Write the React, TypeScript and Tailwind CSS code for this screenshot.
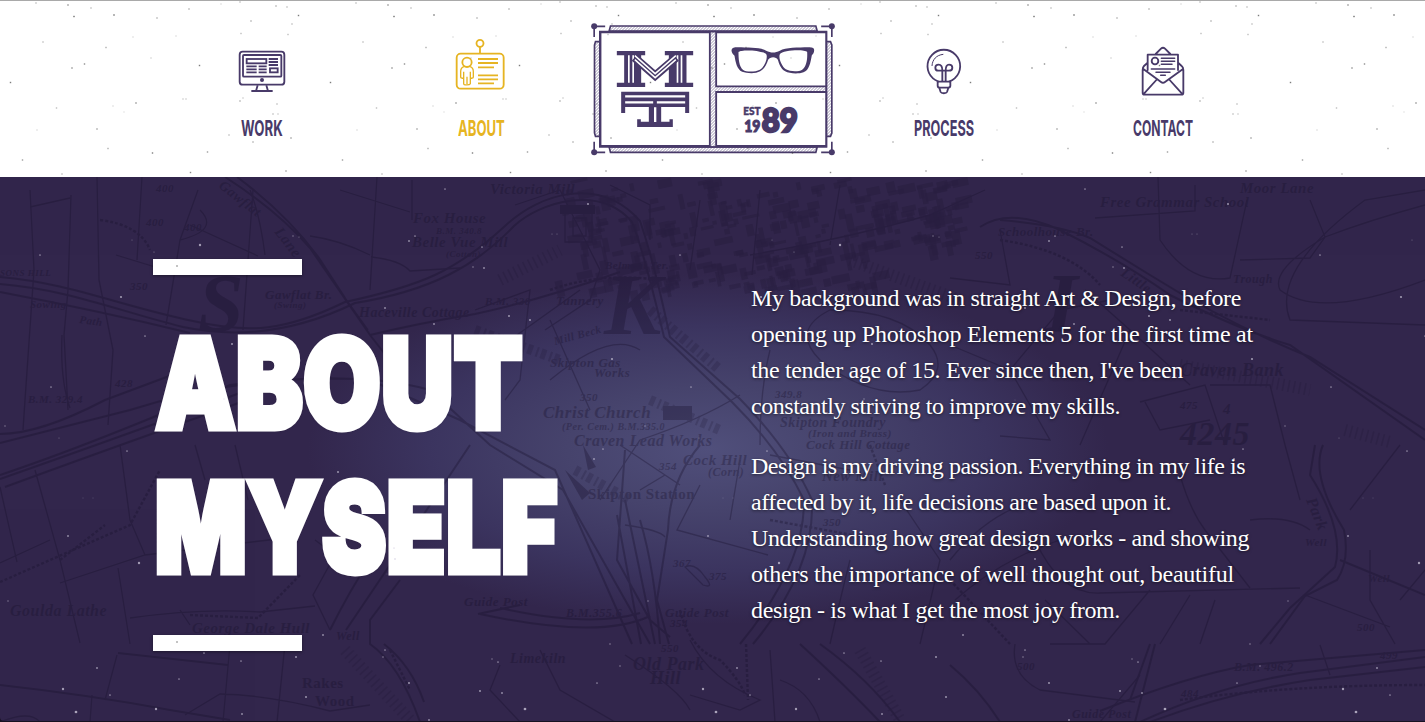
import { useLayoutEffect, useRef, type ReactNode } from "react";

const INK = "#483a69";
const GOLD = "#e6b422";
const MAP = "#150d28";

/* Text squeezed horizontally to a given width */
function Squeezed({ text, width, className }: { text: string; width: number; className: string }) {
  const ref = useRef<HTMLSpanElement>(null);
  useLayoutEffect(() => {
    const el = ref.current;
    if (el) el.style.transform = `scaleX(${width / el.offsetWidth})`;
  }, [width]);
  return (
    <span className="block" style={{ width }}>
      <span ref={ref} className={`inline-block origin-left whitespace-nowrap ${className}`}>{text}</span>
    </span>
  );
}

/* Line of copy tracked out to a given measure */
function Line({ text, width }: { text: string; width: number }) {
  const ref = useRef<HTMLSpanElement>(null);
  useLayoutEffect(() => {
    const el = ref.current;
    if (el) {
      el.style.letterSpacing = "0px";
      el.style.letterSpacing = `${(width - el.getBoundingClientRect().width) / text.length}px`;
    }
  }, [text, width]);
  return (
    <span className="block h-9 whitespace-nowrap">
      <span ref={ref}>{text}</span>
    </span>
  );
}

const lightSpecks: number[][] = [
  [36, 3, 0.4], [68, 5, 0.7], [74, 16.5, 0.9], [91, 8, 0.4], [114, 15, 0.9], [157, 18, 0.5], [189, 9, 0.5], [221, 4, 0.2],
  [43, 42, 0.4], [106, 47.5, 0.5], [72, 68, 0.7], [84.5, 64, 0.7], [10.5, 82.5, 0.8], [151, 58, 0.25], [199.5, 65.5, 0.8],
  [136, 103, 0.7], [183, 99, 0.3], [186, 99, 0.3], [56.5, 108, 0.4], [97, 129, 0.6], [229, 135, 0.4], [108, 148.5, 0.5],
  [152.5, 153, 0.8], [207.5, 152, 0.6], [22.5, 160, 0.6], [62, 174, 0.4], [190.5, 172.5, 0.7], [243, 98, 0.3], [240, 101, 0.5],
  [277, 104, 0.4], [273, 114, 0.4], [278, 114, 0.3], [253, 142, 0.5], [291, 138, 0.6], [298.5, 15.5, 0.8], [276, 6, 0.5],
  [241, 33.5, 0.4], [113, 106, 0.2], [124, 112, 0.15], [37, 130, 0.2], [176, 36, 0.2], [133, 37, 0.2],
  [287, 7, 0.4], [251, 21, 0.5], [292, 24, 0.4], [288, 34.5, 0.4], [286, 171, 0.6], [240, 2, 0.4],
];

const darkSpecks: number[][] = [
  [445, 189, 1], [415, 236, 1], [409, 241, 1.1], [200, 245, 1.4], [40, 255, 1], [293, 236, 0.8], [299, 237, 0.7], [121, 297, 1.3],
  [145, 336, 1], [232, 344, 1.2], [385, 308, 1.1], [434, 324, 1.1], [473, 267, 0.9], [51, 387, 1], [5, 426, 0.8], [59, 438, 0.6],
  [224, 399, 0.8], [154, 252, 0.7], [132, 240, 0.6], [588, 204, 1.2], [482, 247, 1], [484, 268, 1.1], [552, 234, 0.6], [557, 234, 0.6],
  [509, 316, 1.2], [530, 320, 1.2], [612, 359, 1.3], [127, 451, 1], [68, 536, 1.1], [139, 563, 1.4], [8, 601, 0.8], [338, 472, 1.2],
  [323, 635, 1.1], [204, 653, 1], [296, 657, 1.2], [241, 661, 1], [97, 668, 1.1], [63, 689, 1.4], [179, 679, 1], [110, 695, 1],
  [76, 712, 1.6], [156, 709, 1.4], [242, 714, 1.1], [306, 697, 1.2], [409, 683, 1.2], [385, 650, 1], [383, 657, 0.9], [429, 720, 1.1],
  [394, 548, 1], [395, 559, 1.1], [603, 449, 1], [594, 459, 1.1], [610, 644, 0.9], [620, 666, 0.9], [597, 683, 1], [525, 709, 1.6],
  [480, 691, 1.2], [502, 693, 1.1], [498, 662, 1], [492, 659, 0.8], [93, 498, 0.5], [83, 498, 0.5], [387, 574, 0.5], [375, 400, 0.5],
];

const WORK = (
  <g fill="none" stroke={INK} strokeWidth="5.5">
    <rect x="59" y="50" width="134" height="99" rx="9" />
    <rect x="69" y="60" width="115" height="65" rx="3" />
    <rect x="80" y="72" width="59" height="13" />
    <path d="M146 72h28M146 81h28M146 90h28M79 94h31M116 94h24M79 103h31M116 103h24M79 112h31M116 112h24M113 151l-5 17M139 151l5 17M94 168h64" />
    <rect x="150" y="100" width="23" height="12" />
    <circle cx="126" cy="135" r="6" fill={INK} stroke="none" />
  </g>
);

const ABOUT = (
  <g fill="none" stroke={GOLD} strokeWidth="5.5" strokeLinejoin="round">
    <circle cx="780" cy="25" r="10.5" />
    <path d="M780 36v20" />
    <rect x="710" y="56" width="141" height="105" rx="12" />
    <path d="M774 72h60M774 84h60M774 97h48M774 121h60M774 133h60M774 145h48" />
    <circle cx="741" cy="82" r="14" />
    <path d="M732 95c-8 2-10 8-10 15v16c0 4 6 5 9 2v18c0 5 18 5 20 0v-18c3 3 9 2 9-2v-16c0-7-2-13-10-15M741 125v22M731 110v20M751 110v20" strokeWidth="4" />
  </g>
);

const PROCESS = (
  <g fill="none" stroke={INK} strokeWidth="5.5" strokeLinejoin="round">
    <path d="M116 140c-4-2-10-4-17-10a49 49 0 1 1 65 0c-7 6-12 8-17 10" />
    <path d="M113 140v12c0 4 3 6 7 6h23c4 0 8-2 8-6v-12zM118 159l4 12c2 5 17 5 19 0l4-12" />
    <path d="M127 139v-33c0-9-4-17-11-17-6 0-10 4-10 9s4 9 9 9h32c6 0 10-4 10-9s-4-9-10-9c-7 0-10 8-10 17v33" />
    <path d="M96 93c1-19 13-33 34-35" strokeWidth="3" />
  </g>
);

const CONTACT = (
  <g fill="none" stroke={INK} strokeWidth="5.5" strokeLinejoin="round" strokeLinecap="round">
    <path d="M743 105V59h91v46M767 57l16-16c4-4 8-4 12 0l16 16M742 84l-10 9c-4 4-4 5-4 12v68c0 4 2 6 6 6h110c4 0 6-2 6-6v-68c0-7-1-9-5-12l-10-9M730 102l53 39c4 3 8 3 12 0l54-39M732 176l37-41M846 176l-37-41" />
    <circle cx="765" cy="78" r="10" />
    <path d="M784 70h40M784 79h40M784 88h32M754 102h70M768 112h42M782 121h14" strokeWidth="4.5" />
  </g>
);

function NavItem({ label, width, viewBox, gold, children }: { label: string; width: number; viewBox: string; gold?: boolean; children: ReactNode }) {
  return (
    <a href="#" className={`flex w-[219px] flex-col items-center pt-[34px] ${gold ? "text-[#e6b422]" : "text-[#483a69]"}`}>
      <svg viewBox={viewBox} className="size-[60px] overflow-visible">{children}</svg>
      <span className="mt-[20px] block">
        <Squeezed text={label} width={width} className="font-[Inter,sans-serif] text-[22px] leading-[26px] font-bold" />
      </span>
    </a>
  );
}

function Logo() {
  return (
    <svg viewBox="31.5 0 732 435" className="mt-[14px] h-[145px] w-[244px]" fill="none" stroke={INK}>
      <defs>
        <pattern id="hatch" width="9" height="9" patternUnits="userSpaceOnUse">
          <path d="M-2 11L11-2M-2 2l4-4M7 11l4-4" stroke="#6d6288" strokeWidth="2" />
        </pattern>
      </defs>
      <g fill="url(#hatch)" strokeWidth="5">
        <path d="M58 80H45l-3 10v264l3 10h13z" />
        <path d="M737 80h13l4 10v264l-4 10h-13z" />
        <path d="M86 48l4-15h616l4 15zM86 396l4 16h616l4-16z" />
        <path d="M58 50h680v346H58z" />
      </g>
      <g fill="#fff" strokeWidth="5.5">
        <path d="M60 52h328v341H60zM407 52h330v162H407zM407 231h330v162H407z" />
      </g>
      <path d="M41 66V34h33M722 34h32v32M41 380v32h33M722 412h32v-32" strokeWidth="5" />
      <g fill={INK} stroke="none">
        <circle cx="41" cy="34" r="9" /><circle cx="754" cy="34" r="9" />
        <circle cx="41" cy="412" r="9" /><circle cx="754" cy="412" r="9" />
        <path d="M109 108h85v13h-12v82h12v13h-85v-13h22v-82h-22z" />
        <path d="M253 108h85v13h-20v82h20v13h-85v-13h12v-82h-12z" />
        <path d="M122 230h204v64h-12v-18h-72v44h25v-7h10v23H170v-23h11v7h24v-44h-71v18h-12z" />
      </g>
      <path d="M145 121v82M158 121v82M291 121v82M303 121v82" stroke="#fff" strokeWidth="5" />
      <path d="M162 128l62 54 63-54" strokeWidth="25" />
      <path d="M163 122l61 54 62-54M163 134l61 54 62-54" stroke="#fff" strokeWidth="4.5" />
      <path d="M134 244h180M134 262h84M229 262h85M224 277v44" stroke="#fff" strokeWidth="7" />
      <g fill={INK} stroke="none">
        <path fillRule="evenodd" d="M453 105c2-7 8-8 18-8 33 1 69 0 86 10 14 7 27 7 41 0 17-10 55-9 86-10 12 0 17 2 17 9 0 7-3 11-7 15-4 22-8 46-25 51-16 6-43 4-55-3-14-8-18-23-22-35-4-10-24-10-29 0-5 14-11 28-24 35-14 8-41 6-54 1-16-7-20-30-23-48-5-4-9-9-9-17zM474 111c0 20 1 43 14 54 10 7 37 6 50-1 14-8 24-32 20-45-6-13-76-17-84-8zM680 111c-8-9-74-6-82 7-5 11 6 37 18 45 12 7 39 8 49 1 14-10 16-33 15-53z" />
        <g className="font-[Lato,sans-serif]" fontWeight="900">
          <text x="488" y="300" fontSize="33" textLength="52" lengthAdjust="spacingAndGlyphs" stroke={INK} strokeWidth="1.5">EST</text>
          <text x="491" y="352" fontSize="49" textLength="49" lengthAdjust="spacingAndGlyphs" stroke={INK} strokeWidth="3">19</text>
          <text x="544" y="350" fontSize="96" textLength="108" lengthAdjust="spacingAndGlyphs" stroke={INK} strokeWidth="7">89</text>
        </g>
      </g>
    </svg>
  );
}

const buildings = Array.from({ length: 330 }, (_, i) => {
  const r = (n: number) => { const v = Math.sin(i * 12.9898 + n * 78.233) * 43758.5453; return v - Math.floor(v); };
  const x = 560 + r(1) * 400;
  return { x, y: 180 + r(2) * (x > 880 ? 65 : 110), w: 4 + r(3) * 15, h: 3 + r(4) * 6, a: r(5) > 0.4 ? -12 : 78 };
});

const places: [number, number, number, string, number?][] = [
  [156, 192, 11, "400"], [146, 226, 11, "400"], [184, 231, 11, "400"], [218, 187, 14, "Gawflat", 38], [274, 232, 15, "Lane", 52],
  [413, 223, 15, "Fox House"], [436, 234, 9, "B.M. 340.8"], [412, 247, 15, "Belle Vue Mill"], [446, 257, 9, "(Cotton)"], [490, 194, 15, "Victoria Mill"],
  [265, 299, 13, "Gawflat Br."], [274, 308, 9, "(Swing)"], [130, 290, 11, "350"], [0, 276, 9, "SONS HILL"], [30, 308, 11, "Sowing"], [79, 323, 11, "Path", 8],
  [359, 317, 14, "Haceville Cottage"], [115, 387, 11, "428"], [28, 403, 11, "B.M. 329.4"], [485, 305, 11, "B.M. 330"], [556, 305, 13, "Tannery"],
  [550, 367, 13, "Skipton Gas"], [594, 377, 13, "Works"], [543, 418, 17, "Christ Church"], [562, 430, 10, "(Per. Cem.) B.M.335.0"], [574, 446, 16, "Craven Lead Works"],
  [780, 427, 14, "Skipton Foundry"], [808, 437, 11, "(Iron and Brass)"], [806, 449, 13, "Cock Hill Cottage"], [683, 465, 15, "Cock Hill"], [708, 476, 12, "(Corn)"],
  [659, 470, 11, "354"], [822, 481, 15, "New Mill"], [1100, 207, 15, "Free Grammar School"], [1240, 193, 15, "Moor Lane"], [998, 236, 13, "Schoolhouse Br."],
  [975, 259, 11, "550"], [1233, 283, 12, "Trough"], [1120, 275, 14, "Little", 34], [1180, 376, 18, "Craven Bank"], [1180, 409, 11, "475"],
  [1180, 445, 34, "4245"], [1223, 414, 15, "4"], [10, 616, 16, "Goulda Lathe"], [192, 633, 15, "George Dale Hull"], [336, 640, 12, "Well"],
  [464, 606, 13, "Guide Post"], [566, 617, 12, "B.M.355.6"], [665, 617, 13, "Guide Post"], [670, 627, 11, "354"], [673, 567, 11, "367"], [709, 580, 11, "375"],
  [823, 526, 11, "350"], [661, 652, 11, "550"], [510, 663, 14, "Limekiln"], [633, 670, 18, "Old Park"], [650, 684, 18, "Hill"],
  [1017, 670, 11, "500"], [1357, 631, 11, "500"], [1234, 671, 12, "B.M. 496.2"], [1181, 697, 11, "484"], [1380, 659, 11, "499"], [1072, 718, 12, "Guide Post"],
  [1305, 546, 11, "Well"], [1368, 582, 11, "Well"], [1306, 500, 16, "Park", 68], [775, 398, 11, "349.8"], [580, 401, 11, "350"],
  [605, 269, 11, "Belmont Ter."], [555, 345, 11, "Mill Beck", -15],
];

function TownMap() {
  return (
    <svg viewBox="0 177 1425 544" className="absolute inset-0 h-[544px] w-[1425px]" fill="none" stroke={MAP} strokeWidth="1.3" opacity="0.31" aria-hidden="true">
      <g strokeWidth="2">
        <path d="M0 277C70 283 120 306 193 321C250 334 285 331 345 302C420 286 455 272 505 226C540 193 600 175 640 221C650 250 660 290 670 337L740 399Q790 450 812 500Q815 570 753 644" />
        <path d="M0 284C70 290 115 310 183 327C250 341 310 325 355 303C430 291 476 266 514 226C540 202 600 184 632 222C645 255 655 300 664 337L732 402Q780 450 804 500Q805 565 740 644M0 292Q100 311 190 333" />
        <path d="M225 177Q278 211 310 248L370 335L395 367M237 177Q287 214 319 258L345 298M370 335Q420 323 475 314Q540 300 620 272" />
        <path d="M0 434Q40 434 105 400L180 372M0 443L130 410Q250 372 370 380L460 420L555 470L632 644M0 475Q90 445 230 385Q360 370 430 390L490 445L563 490L650 644M0 479Q100 444 240 393M5 487Q100 452 250 399" />
        <path d="M625 500L655 644M640 520Q655 570 660 644M617 515L641 644M625 450L617 560L650 620L670 637M700 445Q670 480 668 530L657 600L669 644" />
        <path d="M400 580L370 620L370 644Q400 665 420 722M384 644Q411 665 424 702M346 630L400 550L470 445M330 630Q350 590 370 560" />
        <path d="M500 608Q590 628 640 613M480 614Q600 640 650 616M520 605L478 614" />
        <path d="M980 227Q1010 207 1060 230Q1120 260 1170 295Q1240 330 1290 345L1425 440M1000 220Q1060 225 1090 238L1150 275Q1230 325 1310 357L1425 430" />
        <path d="M1315 445L1310 475Q1345 530 1335 567Q1310 590 1290 608L1260 644M1323 445Q1310 475 1344 530Q1350 560 1337 580L1305 596L1270 644M1340 560L1425 595" />
        <path d="M1140 722Q1220 685 1300 673L1425 657M1150 722Q1230 692 1310 680L1425 667M1100 711Q1190 675 1250 665L1425 650" />
        <path d="M0 685Q90 695 170 710L230 720M118 653L228 665M800 644Q850 690 880 722M820 644Q870 680 900 722M950 665Q980 690 1000 722M1155 644L1135 722M1150 644L1130 700" />
      </g>
      <path d="M30 190L34 270L25 400L23 430M71 195L68 290L64 335L68 410M97 177L99 280L113 350L108 425M142 177L137 260M198 190L180 240L166 325M190 225L258 256M253 190L243 330M116 255L165 270M62 335Q60 380 70 408M30 207L70 198M200 210Q220 230 180 240M250 190Q260 215 265 255M310 236Q340 240 370 255M377 177L370 290M412 180L412 220M340 190L410 212M371 257Q400 260 410 271L460 268M345 298L368 330" />
      <path d="M120 445L130 520L145 555M35 470L60 560L80 643M0 487L17 562M0 563L50 540M60 583L145 555L285 538M118 568L130 644M130 618Q200 608 260 612L315 606M315 540L335 555L313 595L330 630M195 445L205 480M235 445L248 500M180 610L190 625M0 722Q30 710 40 722M230 644L223 722M285 644L277 722M90 722L92 695M185 715L220 694Q270 695 330 711L370 705M117 655L105 700" />
      <path d="M515 205L560 190L600 270L590 300L545 330M510 340L580 290M565 210h27v32h-27zM573 218h13v18h-13zM610 185L650 205L650 240M700 200L690 270M760 190L752 275M840 185L830 245M750 255Q840 240 930 215L985 190M475 310L530 290L520 380L505 400M550 320L590 410M550 380Q610 330 640 350M740 395Q700 420 640 440L600 500M770 350Q760 390 760 445M830 310Q790 330 820 360Q870 400 920 390Q950 370 930 345Q900 310 830 310z" />
      <path d="M620 445L680 485M640 490L665 475M625 525Q660 530 665 537M700 485L677 530L768 555M850 470L770 455M740 460L730 520M685 567q10-5 20 10q10 12-2 8zM850 560Q840 600 830 644M900 500L940 560L920 644M500 665L490 690L520 722M540 650L560 690L615 722M625 655Q680 690 690 710M690 640Q710 680 760 700L740 710L690 695M770 650L775 722M780 680Q810 690 820 722" />
      <path d="M1095 218L1195 211L1195 185M1158 177L1160 240Q1190 285 1230 278L1247 200M1240 260L1310 258L1325 237Q1370 220 1425 205M1325 237Q1270 270 1280 290Q1320 320 1425 280M1310 200L1325 237M1425 190L1365 200Q1270 270 1290 320L1425 325M1000 230L1010 285L950 278M1085 290L1130 330L1080 445M1130 330L1190 385M1140 402L1205 385L1225 445M1145 402L1160 430L1210 420M950 345L1010 370L1050 440L1000 436M1010 370L1060 310L1110 300M1210 385L1270 385L1285 445" />
      <path d="M1180 475Q1190 510 1205 530L1250 588M1035 540Q1060 595 1100 593L1300 588M1045 600L1090 644M1150 590L1105 644L1050 644M1190 595L1160 644M1215 600L1200 644M1250 520Q1290 515 1310 530M1370 550L1370 600L1395 644M1400 600L1425 570M1305 595L1390 627M1285 445L1300 500M1400 445L1350 510M1320 645L1330 675M1015 644Q1010 675 1040 690L1135 702M1100 722L1140 675M950 560Q990 510 1040 500M955 600Q1000 560 1060 540" />
      <path d="M100 220Q140 225 150 250M550 290Q600 272 660 280M1000 240Q1070 250 1100 285M1180 310L1270 320M870 445L885 485M770 520L880 540M950 580L1010 644M60 560L105 525M0 582L130 525L160 470M190 615L258 618L300 575M1180 700Q1290 685 1425 685M746 644L748 700M390 650L410 690M680 610Q690 650 720 660Q740 680 745 695" strokeDasharray="3 2" strokeWidth="2.4" />
      <path d="M345 650L410 720M860 650L900 720M1180 365L1310 390M1345 430L1390 442M850 260L960 300M500 280L560 250" strokeWidth="12" strokeDasharray="1.5 4" opacity=".5" />
      <path d="M475 330L560 360M650 310L720 370M650 400L720 430M575 470L630 500" strokeWidth="10" strokeDasharray="5 4 2 3" opacity=".55" />
      <g fill={MAP} stroke="none">
        {buildings.map((b, i) => (
          <rect key={i} x={b.x} y={b.y} width={b.w} height={b.h} opacity=".6" transform={`rotate(${b.a} ${b.x} ${b.y})`} />
        ))}
        <path d="M663 406h29v14h-29zM583 445l13 22-8 3zM560 205h35v9h-35zM565 470l25 23-8 7z" />
        <g className="font-[Liberation_Serif,serif]" fontStyle="italic" fontWeight="700">
          {places.map(([x, y, size, name, angle = 0], i) => (
            <text key={i} x={x} y={y} fontSize={size} letterSpacing=".5" transform={`rotate(${angle} ${x} ${y})`}>{name}</text>
          ))}
          <text x="198" y="331" fontSize="82">S</text>
          <text x="604" y="334" fontSize="86">K</text>
          <text x="1045" y="332" fontSize="84">I</text>
        </g>
        <g className="font-[Liberation_Serif,serif]" fontWeight="700" fontSize="15" letterSpacing=".5">
          <text x="588" y="499">Skipton Station</text>
          <text x="302" y="688">Rakes</text>
          <text x="315" y="706">Wood</text>
        </g>
      </g>
    </svg>
  );
}

const intro: [string, number][] = [
  ["My background was in straight Art & Design, before", 490],
  ["opening up Photoshop Elements 5 for the first time at", 502],
  ["the tender age of 15. Ever since then, I've been", 432],
  ["constantly striving to improve my skills.", 369],
];
const passion: [string, number][] = [
  ["Design is my driving passion. Everything in my life is", 494],
  ["affected by it, life decisions are based upon it.", 420],
  ["Understanding how great design works - and showing", 498],
  ["others the importance of well thought out, beautiful", 483],
  ["design - is what I get the most joy from.", 369],
];

export default function App() {
  return (
    <div className="flex h-[722px] w-[1425px] flex-col overflow-hidden bg-[#171222]">
      <header className="relative h-[177px] shrink-0 border-t border-[#a9a9a9] bg-white">
        <nav className="mx-auto flex w-[1120px]">
          <NavItem label="WORK" width={42} viewBox="36 0 180 180">{WORK}</NavItem>
          <NavItem label="ABOUT" width={47} viewBox="693 0 180 180" gold>{ABOUT}</NavItem>
          <Logo />
          <NavItem label="PROCESS" width={60} viewBox="42 0 180 180">{PROCESS}</NavItem>
          <NavItem label="CONTACT" width={60} viewBox="699 0 180 180">{CONTACT}</NavItem>
        </nav>
        <svg className="pointer-events-none absolute -top-px left-0 h-[177px] w-[1425px]" aria-hidden="true">
          {[0, 320, 640, 960, 1280].map((dx) =>
            lightSpecks.map(([x, y, a], i) => <rect key={`${dx}-${i}`} x={x + dx - 0.7} y={y - 0.7} width="1.4" height="1.4" fill="#333" opacity={a * 0.8} />)
          )}
        </svg>
      </header>
      <main className="relative h-[544px] shrink-0 overflow-hidden rounded-bl-[4px] bg-[#32264c] bg-[radial-gradient(ellipse_400px_175px_at_708px_272px,#504f7b_0%,#46436c_35%,#3b345f_70%,#32264c_100%)]">
        <TownMap />
        <div className="relative mx-auto flex w-[1120px]">
          <div className="w-[598.5px] pt-[82px]">
            <div className="h-4 w-[149px] bg-white shadow-[0_1px_3px_rgba(0,0,0,0.4)]" />
            <h1 className="mt-[36px] font-[Inter,sans-serif] text-[124px] leading-[144px] font-black tracking-[1px] text-white [-webkit-text-stroke:7px_white] [text-shadow:0_2px_4px_rgba(0,0,0,0.35)]">
              <span className="block pl-[3px]"><Squeezed text="ABOUT" width={367} className="h-[144px]" /></span>
              <span className="block pl-[2px]"><Squeezed text="MYSELF" width={403} className="h-[144px]" /></span>
            </h1>
            <div className="mt-[36px] h-4 w-[149px] bg-white shadow-[0_1px_3px_rgba(0,0,0,0.4)]" />
          </div>
          <div className="pt-[103px] font-[Liberation_Serif,serif] text-[24px] leading-9 text-white [text-shadow:0_1px_3px_rgba(0,0,0,0.55)]">
            <p>{intro.map(([t, w]) => <Line key={t} text={t} width={w} />)}</p>
            <p className="mt-6">{passion.map(([t, w]) => <Line key={t} text={t} width={w} />)}</p>
          </div>
        </div>
        <svg className="pointer-events-none absolute inset-0 h-[544px] w-[1425px]" viewBox="0 177 1425 544" fill="#d4cfe0" aria-hidden="true">
          {[0, 640, 1280].map((dx) =>
            darkSpecks.map(([x, y, r], i) => <circle key={`${dx}-${i}`} cx={x + dx} cy={y} r={r * 0.85} opacity={0.35 + r * 0.25} />)
          )}
          <g fill="#777"><circle cx="177" cy="266" r=".8" /><circle cx="177" cy="642" r=".8" /></g>
        </svg>
      </main>
    </div>
  );
}
